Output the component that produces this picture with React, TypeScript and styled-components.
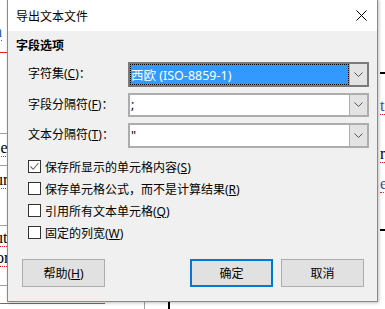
import React from 'react'
import styled, { createGlobalStyle } from 'styled-components'

const GlobalStyle = createGlobalStyle`
  html, body {
    margin: 0;
    padding: 0;
    background: #ffffff;
  }
  body {
    font-family: "Noto Sans", "Noto Sans CJK SC", sans-serif;
    font-size: 12px;
    color: #000;
  }
`

const Desk = styled.div`
  position: relative;
  width: 385px;
  height: 309px;
  overflow: hidden;
  background: #fff;
`

const DocLine = styled.div<{ $x: number; $y: number; $w: number; $c?: string; $h?: number }>`
  position: absolute;
  left: ${(p) => p.$x}px;
  top: ${(p) => p.$y}px;
  width: ${(p) => p.$w}px;
  height: ${(p) => p.$h ?? 1}px;
  background: ${(p) => p.$c ?? '#a0a0a0'};
`

const DocText = styled.span<{ $x: number; $y: number; $c?: string }>`
  position: absolute;
  left: ${(p) => p.$x}px;
  top: ${(p) => p.$y}px;
  font-family: "Liberation Serif", serif;
  font-size: 16px;
  line-height: 16px;
  color: ${(p) => p.$c ?? '#000'};
  border-bottom: 1px dotted #e02020;
`

const Dialog = styled.div`
  position: absolute;
  left: 7px;
  top: -1px;
  width: 369px;
  height: 301px;
  border: 1px solid #8a8a8a;
  background: #f0f0f0;
  box-shadow: 1px 1px 3px rgba(0, 0, 0, 0.25);
  display: flex;
  flex-direction: column;
`

const TitleBar = styled.div`
  height: 31px;
  background: #fff;
  display: flex;
  align-items: center;
  justify-content: space-between;
  padding: 0 10px 0 8px;
  flex-shrink: 0;
`

const Title = styled.span`
  font-size: 12px;
  margin-top: 1px;
`

const Close = styled.svg`
  width: 11px;
  height: 11px;
`

const Body = styled.div`
  flex: 1;
  display: flex;
  flex-direction: column;
  padding: 7px 8px 14px 8px;
`

const Section = styled.div`
  font-weight: bold;
  line-height: 16px;
  margin-bottom: 8px;
`

const Form = styled.div`
  display: grid;
  grid-template-columns: 100px 1fr;
  row-gap: 6px;
  padding-left: 12px;
  align-items: center;
`

const Label = styled.span`
  line-height: 16px;
`

const Combo = styled.div<{ $focus?: boolean }>`
  height: 24.5px;
  box-sizing: border-box;
  border: 2px solid ${(p) => (p.$focus ? '#7a7a7a' : '#adadad')};
  background: #fff;
  display: flex;
`

const ComboValue = styled.div<{ $selected?: boolean }>`
  flex: 1;
  display: flex;
  align-items: center;
  padding-left: 1px;
  background: ${(p) => (p.$selected ? '#3399ff' : '#fff')};
  color: ${(p) => (p.$selected ? '#fff' : '#000')};
  outline: ${(p) => (p.$selected ? '1px dotted #000' : 'none')};
  outline-offset: -1px;
  font-size: 12.5px;
`

const DropBtn = styled.div`
  width: 17px;
  border-left: 1px solid #adadad;
  background: #e3e3e3;
  display: flex;
  align-items: center;
  justify-content: center;
`

const Checks = styled.div`
  display: flex;
  flex-direction: column;
  padding-left: 12px;
  margin-top: 8px;
`

const CheckRow = styled.label`
  display: flex;
  align-items: center;
  height: 22px;
  gap: 4px;
`

const Box = styled.span`
  width: 13px;
  height: 13px;
  box-sizing: border-box;
  border: 1px solid #333;
  background: #fff;
  display: flex;
  align-items: center;
  justify-content: center;
`

const Buttons = styled.div`
  margin-top: auto;
  display: flex;
  align-items: center;
  padding-left: 6px;
  padding-right: 5px;
`

const Button = styled.button<{ $default?: boolean }>`
  width: 83px;
  height: 28px;
  box-sizing: border-box;
  background: #e1e1e1;
  border: ${(p) => (p.$default ? '2px solid #0078d7' : '1px solid #adadad')};
  font-family: inherit;
  font-size: 12px;
  color: #000;
  padding: 0;
  & + & {
    margin-left: 8px;
  }
`

const Spacer = styled.div`
  flex: 1;
`

const Chevron = () => (
  <svg width="9" height="5" viewBox="0 0 9 5">
    <path d="M0.5 0.5 L4.5 4.5 L8.5 0.5" fill="none" stroke="#555" strokeWidth="1" />
  </svg>
)

const Tick = () => (
  <svg width="11" height="11" viewBox="0 0 11 11">
    <path d="M1.5 5.5 L4.2 8.3 L9.5 2" fill="none" stroke="#666" strokeWidth="1.1" />
  </svg>
)

const Check = ({ checked, children }: { checked?: boolean; children: React.ReactNode }) => (
  <CheckRow>
    <Box>{checked && <Tick />}</Box>
    <span>{children}</span>
  </CheckRow>
)

const App = (): React.ReactElement => (
  <Desk>
    <GlobalStyle />
    <DocText $x={-6} $y={24} $c="#3050a0">h</DocText>
    <DocLine $x={0} $y={52} $w={7} $c="#e02020" />
    <DocLine $x={0} $y={133} $w={7} />
    <DocText $x={-4} $y={140}>le</DocText>
    <DocLine $x={0} $y={165} $w={7} />
    <DocText $x={-5} $y={172}>ur</DocText>
    <DocLine $x={0} $y={225} $w={7} />
    <DocText $x={-5} $y={230}>ut</DocText>
    <DocText $x={-4} $y={250}>or</DocText>
    <DocLine $x={0} $y={285} $w={7} />
    <DocLine $x={0} $y={303} $w={105} $c="#e04040" />
    <DocLine $x={144} $y={301} $w={1} $h={8} />
    <DocLine $x={168} $y={301} $w={2} $h={8} $c="#000" />
    <DocLine $x={380} $y={72} $w={5} $c="#000" $h={2} />
    <DocText $x={380} $y={98} $c="#3050a0">ti</DocText>
    <DocText $x={380} $y={146}>ro</DocText>
    <DocText $x={380} $y={176} $c="#3050a0">er</DocText>
    <DocLine $x={380} $y={229} $w={5} $c="#000" $h={2} />

    <Dialog>
      <TitleBar>
        <Title>导出文本文件</Title>
        <Close viewBox="0 0 11 11">
          <path d="M0.5 0.5 L10.5 10.5 M10.5 0.5 L0.5 10.5" stroke="#000" strokeWidth="1" />
        </Close>
      </TitleBar>
      <Body>
        <Section>字段选项</Section>
        <Form>
          <Label>
            字符集(<u>C</u>)：
          </Label>
          <Combo $focus>
            <ComboValue $selected>西欧 (ISO-8859-1)</ComboValue>
            <DropBtn>
              <Chevron />
            </DropBtn>
          </Combo>
          <Label>
            字段分隔符(<u>F</u>)：
          </Label>
          <Combo>
            <ComboValue>;</ComboValue>
            <DropBtn>
              <Chevron />
            </DropBtn>
          </Combo>
          <Label>
            文本分隔符(<u>T</u>)：
          </Label>
          <Combo>
            <ComboValue>"</ComboValue>
            <DropBtn>
              <Chevron />
            </DropBtn>
          </Combo>
        </Form>
        <Checks>
          <Check checked>
            保存所显示的单元格内容(<u>S</u>)
          </Check>
          <Check>
            保存单元格公式，而不是计算结果(<u>R</u>)
          </Check>
          <Check>
            引用所有文本单元格(<u>Q</u>)
          </Check>
          <Check>
            固定的列宽(<u>W</u>)
          </Check>
        </Checks>
        <Buttons>
          <Button>
            帮助(<u>H</u>)
          </Button>
          <Spacer />
          <Button $default>确定</Button>
          <Button>取消</Button>
        </Buttons>
      </Body>
    </Dialog>
  </Desk>
)

export default App
